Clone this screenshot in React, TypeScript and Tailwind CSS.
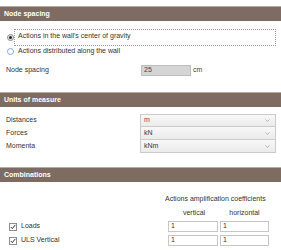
import React from "react";

function Header({ title }: { title: string }) {
  return (
    <div className="h-[15px] bg-[#7e6b61] border-t border-[#b6aaa3] flex items-center pl-[4px] text-white font-bold text-[7px]">
      {title}
    </div>
  );
}

function Chevron() {
  return (
    <svg width="5" height="3" viewBox="0 0 5 3" className="mr-[5px]">
      <path d="M0.5 0.5 L2.5 2.5 L4.5 0.5" fill="none" stroke="#a5a5a5" strokeWidth="0.8" />
    </svg>
  );
}

function SelectRow({ label, value, first, red }: { label: string; value: string; first?: boolean; red?: boolean }) {
  return (
    <div className="flex h-[13px]">
      <div className="w-[140px] pl-[6px] flex items-center">{label}</div>
      <div
        className={`w-[136px] flex items-center justify-between border-x border-b ${first ? "border-t" : ""} border-[#cbcbcb] bg-gradient-to-b from-[#f8f8f8] to-[#ebebeb] pl-[3px]`}
      >
        <span className={red ? "text-[#8a3b3b]" : "text-[#2f3b4a]"}>{value}</span>
        <Chevron />
      </div>
    </div>
  );
}

function Check() {
  return (
    <div className="w-[8px] h-[8px] border border-[#8d8d8d] bg-white flex items-center justify-center">
      <svg width="6" height="6" viewBox="0 0 6 6">
        <path d="M0.8 3 L2.3 4.6 L5.3 0.9" fill="none" stroke="#333" strokeWidth="1" />
      </svg>
    </div>
  );
}

function NumInput({ w }: { w: string }) {
  return (
    <div className={`${w} h-[11px] border border-[#c6c6c6] bg-white flex items-center pl-[2px] text-[#333]`}>1</div>
  );
}

export default function App() {
  return (
    <div
      className="w-[281px] h-[250px] bg-white text-[7px] text-[#333] overflow-hidden"
      style={{ fontFamily: '"Liberation Sans", Arial, sans-serif' }}
    >
      <div className="pt-[6px]">
        <Header title="Node spacing" />
        <div className="mt-[8px] flex items-center h-[17px]">
          <div className="ml-[7px] w-[7px] h-[7px] rounded-full border border-[#8a8a8a] bg-[#e8e8e8] flex items-center justify-center">
            <div className="w-[3px] h-[3px] rounded-full bg-[#222]" />
          </div>
          <div className="ml-[0px] w-[262px] h-[17px] border border-dotted border-[#9a9a9a] pl-[3px] pt-[1px]">
            Actions in the wall's center of gravity
          </div>
        </div>
        <div className="flex items-center h-[10px]">
          <div className="ml-[7px] w-[7px] h-[7px] rounded-full border border-[#7fa8d8] bg-white" />
          <div className="pl-[3px] ml-[1px]">Actions distributed along the wall</div>
        </div>
        <div className="mt-[9px] flex items-center h-[11px]">
          <div className="w-[141px] pl-[6px]">Node spacing</div>
          <div className="w-[50px] h-[11px] border border-[#bdbdbd] bg-[#d5d5d5] flex items-center pl-[2px] text-[#444]">25</div>
          <div className="ml-[2px] text-[#444]">cm</div>
        </div>
      </div>

      <div className="mt-[16px]">
        <Header title="Units of measure" />
        <div className="mt-[7px]">
          <SelectRow label="Distances" value="m" first red />
          <SelectRow label="Forces" value="kN" />
          <SelectRow label="Momenta" value="kNm" />
        </div>
      </div>

      <div className="mt-[14px]">
        <Header title="Combinations" />
        <div className="mt-[12px] h-[10px] flex items-center pl-[165px]">Actions amplification coefficients</div>
        <div className="mt-[4px] h-[10px] flex items-center">
          <div className="w-[168px]" />
          <div className="w-[52px] flex justify-center">vertical</div>
          <div className="w-[49px] flex justify-center">horizontal</div>
        </div>
        <div className="mt-[3px] flex flex-col gap-[3px]">
          {["Loads", "ULS Vertical"].map((l) => (
            <div key={l} className="flex items-center h-[11px]">
              <div className="w-[168px] flex items-center pl-[9px]">
                <Check />
                <span className="ml-[4px]">{l}</span>
              </div>
              <NumInput w="w-[50px]" />
              <div className="w-[2px]" />
              <NumInput w="w-[49px]" />
            </div>
          ))}
        </div>
      </div>
    </div>
  );
}
